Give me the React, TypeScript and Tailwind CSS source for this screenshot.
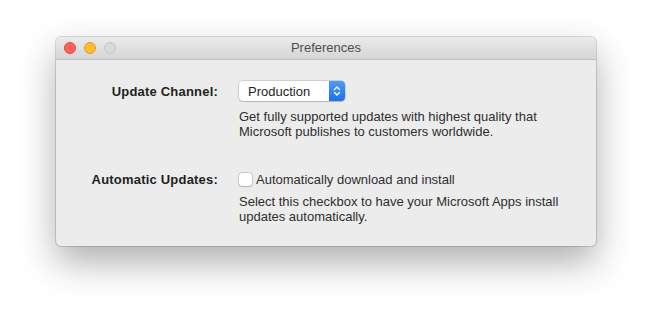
function TrafficLights() {
  return (
    <div className="flex items-center gap-2 pl-2">
      <span className="block w-3 h-3 rounded-full bg-[#fe5f57] border border-[#e1483f]" />
      <span className="block w-3 h-3 rounded-full bg-[#febc2e] border border-[#de9f26]" />
      <span className="block w-3 h-3 rounded-full bg-[#dadada] border border-[#c4c4c4]" />
    </div>
  )
}

function PopUp({ value }: { value: string }) {
  return (
    <div className="flex w-[106px] h-[20px] rounded-[4px] bg-white shadow-[0_0_0_0.5px_rgba(0,0,0,0.25),0_1px_1px_rgba(0,0,0,0.12)]">
      <div className="flex-1 flex items-center pl-[9px] text-[13px] text-[#1f1f1f]">{value}</div>
      <div className="w-[16px] h-full rounded-r-[4px] bg-gradient-to-b from-[#4b9bf9] to-[#1f6ff0] flex items-center justify-center">
        <svg width="8" height="12" viewBox="0 0 8 12" fill="none" stroke="white" strokeWidth="1.4" strokeLinecap="round" strokeLinejoin="round">
          <path d="M1.5 4.5 L4 2 L6.5 4.5" />
          <path d="M1.5 7.5 L4 10 L6.5 7.5" />
        </svg>
      </div>
    </div>
  )
}

export default function App() {
  return (
    <div className="min-h-[319px] bg-white pt-[37px] pl-[56px] font-['Liberation_Sans',Arial,sans-serif]">
      <div className="w-[540px] h-[209px] rounded-[5px] bg-[#ececec] overflow-hidden shadow-[0_16px_36px_rgba(0,0,0,0.32),0_0_0_1px_rgba(0,0,0,0.14)]">
        <div className="relative h-[23px] flex items-center bg-gradient-to-b from-[#ebebeb] to-[#d6d6d6] border-b border-[#c2c2c2]">
          <TrafficLights />
          <div className="absolute inset-0 flex items-center justify-center text-[13px] text-[#4d4d4d]">Preferences</div>
        </div>

        <div className="grid grid-cols-[162px_1fr] gap-x-[21px] pt-[21px] text-[13px] leading-[15px]">
          <div className="h-[20px] flex items-center justify-end font-bold tracking-[0.2px] text-[#1e1e1e]">Update Channel:</div>
          <PopUp value="Production" />
          <div />
          <p className="mt-[8px] w-[330px] text-[#2e2e2e]">
            Get fully supported updates with highest quality that Microsoft publishes to customers worldwide.
          </p>

          <div className="mt-[33px] flex justify-end font-bold tracking-[0.2px] text-[#1e1e1e]">Automatic Updates:</div>
          <label className="mt-[33px] flex items-center gap-[4px] text-[#2e2e2e]">
            <span className="block w-[13px] h-[13px] rounded-[3px] bg-white shadow-[0_0_0_0.5px_rgba(0,0,0,0.3),0_1px_1px_rgba(0,0,0,0.12)]" />
            Automatically download and install
          </label>
          <div />
          <p className="mt-[7px] w-[330px] text-[#2e2e2e]">
            Select this checkbox to have your Microsoft Apps install updates automatically.
          </p>
        </div>
      </div>
    </div>
  )
}
